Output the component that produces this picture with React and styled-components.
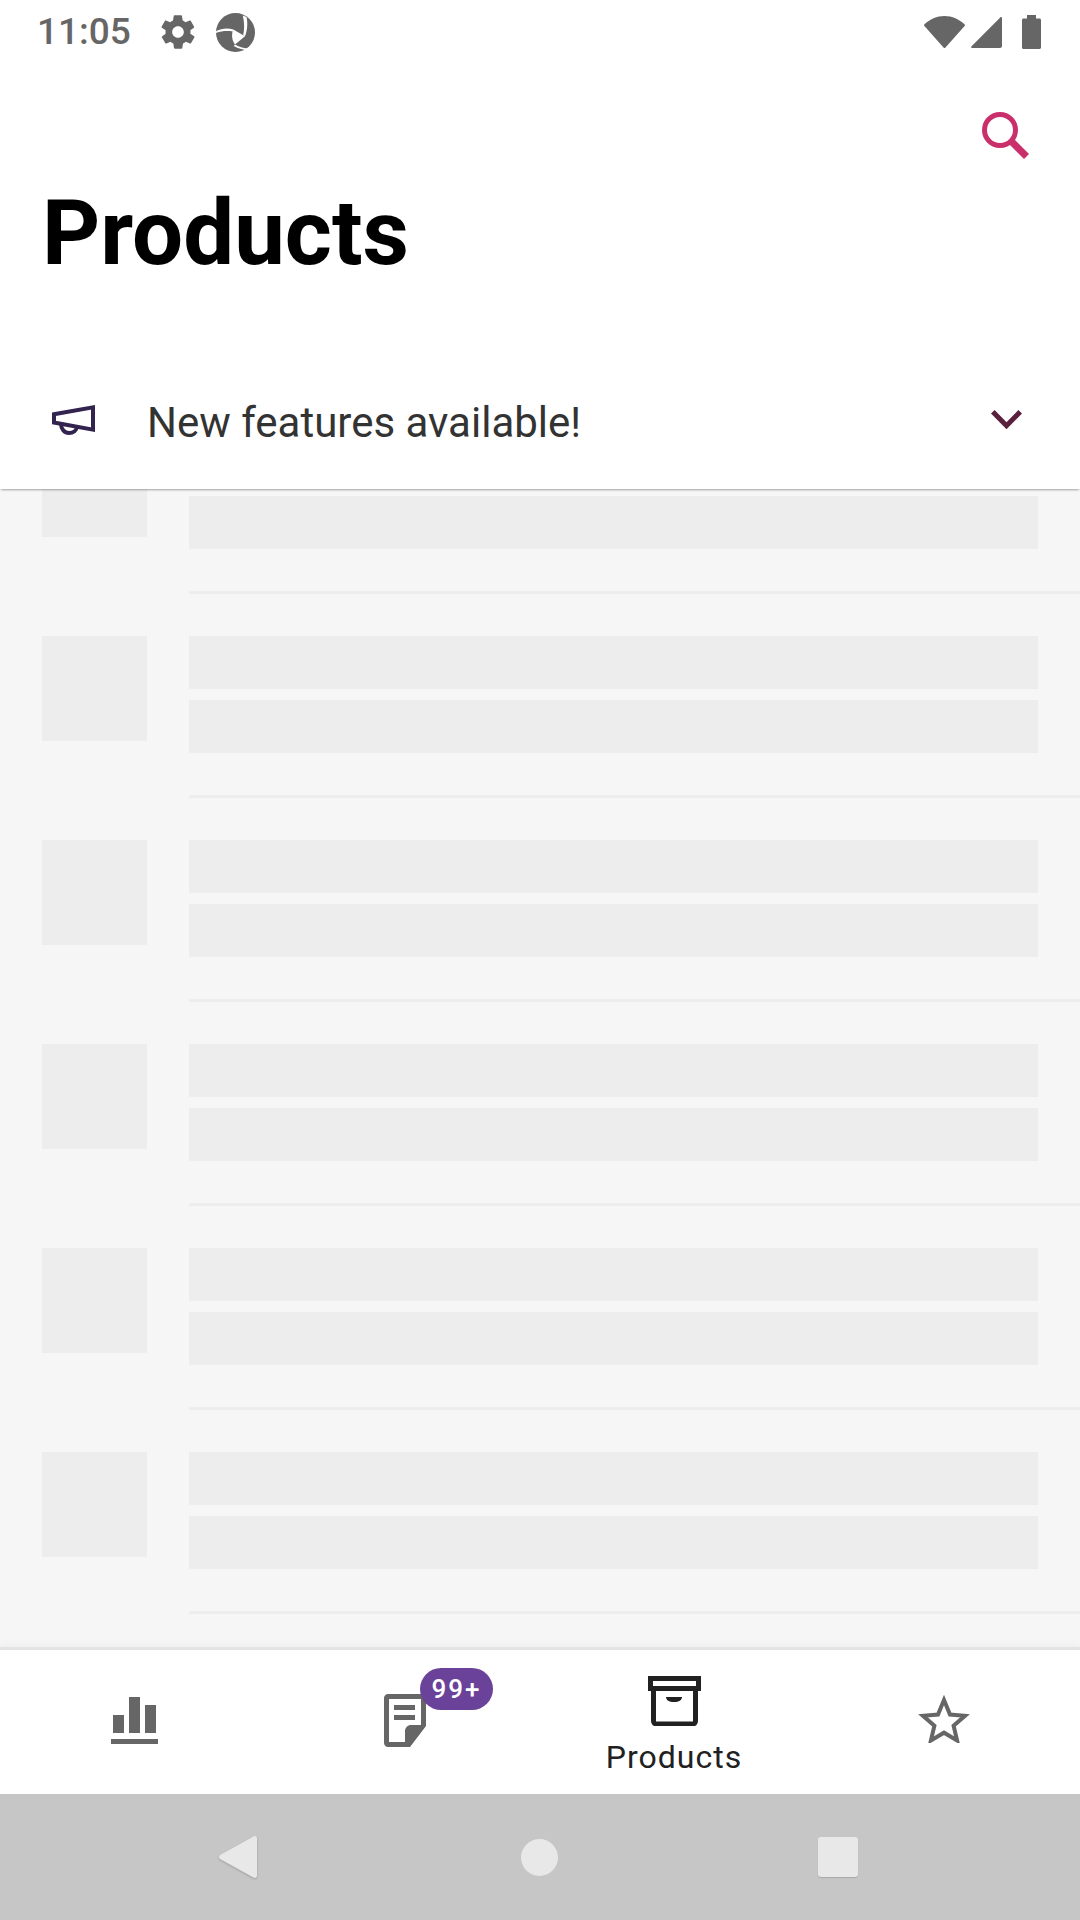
import styled, { createGlobalStyle } from "styled-components";

const GlobalStyle = createGlobalStyle`
  html, body {
    margin: 0;
    padding: 0;
    background: #fff;
  }
  * {
    box-sizing: border-box;
  }
`;

const Screen = styled.div`
  width: 1080px;
  height: 1920px;
  display: flex;
  flex-direction: column;
  background: #fff;
  font-family: Roboto, "Liberation Sans", sans-serif;
  overflow: hidden;
`;

const StatusBar = styled.div`
  height: 64px;
  flex: none;
  display: flex;
  align-items: center;
  padding: 0 39px 0 37px;
  color: #666;
`;

const Time = styled.span`
  font-size: 37px;
  font-weight: 500;
  line-height: 64px;
  width: 121px;
`;

const StatusLeft = styled.div`
  display: flex;
  align-items: center;
  gap: 18px;
  flex: 1;
`;

const StatusRight = styled.div`
  display: flex;
  align-items: center;
`;

const Header = styled.div`
  height: 292px;
  flex: none;
  padding: 48px 51px 0 42px;
  display: flex;
  flex-direction: column;
`;

const SearchRow = styled.div`
  display: flex;
  justify-content: flex-end;
`;

const Title = styled.h1`
  margin: 21px 0 0;
  font-size: 90.5px;
  font-weight: 700;
  line-height: 106px;
  color: #000;
`;

const Banner = styled.div`
  height: 133px;
  flex: none;
  display: flex;
  align-items: center;
  padding: 0 58px 0 52px;
  position: relative;
  z-index: 1;
  background: #fff;
  box-shadow: 0 2px 2px -1px rgba(0, 0, 0, 0.35);
`;

const BannerText = styled.span`
  flex: 1;
  margin-left: 52px;
  font-size: 42px;
  color: #333;
`;

const List = styled.div`
  flex: 1;
  min-height: 0;
  overflow: hidden;
  background: #f6f6f6;
`;

const Rows = styled.div`
  margin-top: -99px;
`;

const Row = styled.div`
  height: 204px;
  display: flex;
  gap: 42px;
  padding-left: 42px;
`;

const Thumb = styled.div`
  width: 105px;
  height: 105px;
  margin-top: 42px;
  background: #ededed;
`;

const RowBody = styled.div`
  flex: 1;
  padding-top: 42px;
  border-bottom: 3px solid #ededed;
`;

const Line = styled.div`
  width: 849px;
  height: 53px;
  background: #ededed;
  & + & {
    margin-top: 11px;
  }
`;

const TabBar = styled.div`
  height: 144px;
  flex: none;
  display: grid;
  grid-template-columns: repeat(4, 270px);
  position: relative;
  z-index: 1;
  background: #fff;
  box-shadow: 0 -3px 0 #e4e4e4, 0 -6px 8px rgba(0, 0, 0, 0.03);
`;

const Tab = styled.div`
  position: relative;
  display: flex;
  flex-direction: column;
  align-items: center;
  padding-top: ${(p) => (p.$active ? "26px" : "44px")};
  padding-right: ${(p) => (p.$active ? "2px" : "0")};
`;

const TabLabel = styled.span`
  margin-top: 12px;
  font-size: 32px;
  line-height: 38px;
  letter-spacing: 1px;
  color: #212121;
`;

const Badge = styled.span`
  position: absolute;
  left: 150px;
  top: 18px;
  width: 73px;
  height: 42px;
  border-radius: 21px;
  background: #6a4299;
  color: #fff;
  font-size: 26px;
  font-weight: 500;
  letter-spacing: 2px;
  line-height: 42px;
  text-align: center;
`;

const NavBar = styled.div`
  height: 126px;
  flex: none;
  display: grid;
  grid-template-columns: 219px 38px 264px 37px 260px 40px;
  align-items: center;
  background: #c6c6c6;
`;

const Filler = styled.span``;

const NavCircle = styled.div`
  width: 37px;
  height: 37px;
  border-radius: 50%;
  background: #e8e8e8;
`;

const NavSquare = styled.div`
  width: 40px;
  height: 40px;
  border-radius: 3px;
  background: #e8e8e8;
  box-shadow: 0 1px 1px rgba(0, 0, 0, 0.15);
`;

function App() {
  return (
    <Screen>
      <GlobalStyle />
      <StatusBar>
        <StatusLeft>
          <Time>11:05</Time>
          <svg width="40" height="40" viewBox="0 0 24 24" fill="#666" style={{ marginLeft: -18 }}>
            <path d="M19.4 13c0-.3.1-.6.1-1s0-.7-.1-1l2.100-1.600c.2-.2.3-.4.1-.7l-2-3.400c-.1-.2-.4-.3-.6-.2l-2.500 1c-.5-.4-1.100-.7-1.700-1l-.4-2.600c0-.3-.2-.5-.5-.5h-4c-.3 0-.5.2-.5.5l-.4 2.600c-.6.3-1.200.6-1.700 1l-2.500-1c-.2-.1-.5 0-.6.2l-2 3.400c-.2.3-.1.5.1.7L4.600 11c0 .3-.1.7-.1 1s0 .7.1 1l-2.100 1.600c-.2.2-.3.4-.1.7l2 3.400c.1.2.4.3.6.2l2.500-1c.5.4 1.100.7 1.700 1l.4 2.600c0 .3.2.5.5.5h4c.3 0 .5-.2.5-.5l.4-2.600c.6-.3 1.200-.6 1.700-1l2.500 1c.2.1.5 0 .6-.2l2-3.400c.2-.3.1-.5-.1-.7L19.400 13zM12 15.500c-1.900 0-3.500-1.600-3.500-3.500s1.600-3.500 3.500-3.500 3.500 1.600 3.500 3.500-1.600 3.500-3.500 3.500z" />
          </svg>
          <svg width="39" height="39" viewBox="0 0 39 39">
            <circle cx="19.500" cy="19.500" r="19.500" fill="#666" />
            <path fill="#fff" d="M17.300 16.600l11.700 6.700-10 8.300c-1.500-2-2.800-5-2.900-8-.1-2.500.3-5 1.200-7z" />
            <path fill="#fff" d="M.2 18c5.500-2.600 11.500-3.300 17.100-1.400l-.6 1.800C11 17.600 5.500 17.900 0 20z" />
            <path fill="#fff" d="M30.500 4c1.500 6.500.8 13.700-1.500 19.300l-1.800-1c1.200-6 1.400-12-.4-19.800z" />
            <path fill="#fff" d="M19 31.600c4.500 2.600 10 4.100 16.500 3.900l-1.300 1.700c-6.200.1-12-1.500-16.400-4.200z" />
          </svg>
        </StatusLeft>
        <StatusRight>
          <svg width="41" height="32" viewBox="0 0 41 32" fill="#666" style={{ marginRight: 6 }}>
            <path d="M.3 8.400C5.800 3.200 12.800 0 20.500 0s14.700 3.200 20.200 8.400c.4.400.4 1 .1 1.400L21.500 31.600c-.5.600-1.500.600-2 0L.2 9.800c-.3-.4-.3-1 .1-1.400z" />
          </svg>
          <svg width="31" height="31" viewBox="0 0 31 31" fill="#666" style={{ marginRight: 20 }}>
            <path d="M29.500.3c.6-.5 1.500-.1 1.500.7v28c0 1.100-.9 2-2 2H1c-.8 0-1.200-.9-.7-1.500L29.500.3z" />
          </svg>
          <svg width="19" height="34" viewBox="0 0 19 34" fill="#666">
            <path d="M5 0h9v3.500h3.500c.8 0 1.500.7 1.500 1.500v27.500c0 .8-.7 1.500-1.500 1.500h-16C.7 34 0 33.300 0 32.500V5c0-.8.7-1.500 1.500-1.500H5V0z" />
          </svg>
        </StatusRight>
      </StatusBar>
      <Header>
        <SearchRow>
          <svg width="47" height="47" viewBox="0 0 47 47" fill="none" stroke="#c9306b">
            <circle cx="18" cy="18" r="15.500" strokeWidth="5" />
            <path d="M29 29l15.500 15.500" strokeWidth="7" />
          </svg>
        </SearchRow>
        <Title>Products</Title>
      </Header>
      <Banner>
        <svg width="43" height="30" viewBox="0 0 43 30" fill="none" stroke="#33234f" strokeWidth="4" style={{ marginTop: -6 }}>
          <path d="M41 2.400v22.200L2 17.500V9.200z" />
          <path d="M9 19c0 5 3.500 9 8 9s7.500-3 8-6" />
        </svg>
        <BannerText>New features available!</BannerText>
        <svg width="31" height="20" viewBox="0 0 31 20" fill="none" stroke="#5a1f3d" strokeWidth="5" style={{ marginTop: -6 }}>
          <path d="M1.800 1.800l13.700 14 13.700-14" />
        </svg>
      </Banner>
      <List>
        <Rows>
          {[0, 1, 2, 3, 4, 5, 6].map((n) => (
            <Row key={n}>
              <Thumb />
              <RowBody>
                <Line />
                <Line />
              </RowBody>
            </Row>
          ))}
        </Rows>
      </List>
      <TabBar>
        <Tab>
          <svg width="47" height="47" viewBox="0 0 47 47" fill="#666" style={{ marginTop: 3, marginRight: 1 }}>
            <path d="M2 18h11v18H2zM18 0h11v36H18zM34 8h11v28H34zM0 42h47v5H0z" />
          </svg>
        </Tab>
        <Tab>
          <svg width="42" height="53" viewBox="0 0 42 53">
            <path fill="#666" fillRule="evenodd" d="M4 0h38v32L26 53H4c-2.200 0-4-1.800-4-4V4c0-2.200 1.800-4 4-4zm1 5v43h16V37c0-3.300 2.700-6 6-6h10V5H5z" />
            <path fill="#666" d="M10 11h21v5H10zM10 21h21v5H10z" />
          </svg>
          <Badge>99+</Badge>
        </Tab>
        <Tab $active>
          <svg width="53" height="50" viewBox="0 0 53 50" fill="none" stroke="#212121">
            <path d="M2.500 2.500h48v10h-48z" strokeWidth="5" />
            <path d="M5.500 15v30c0 1.500 1 3 3 3h36c2 0 3-1.500 3-3V15" strokeWidth="5" />
            <path d="M18 21h16c0 3-3 5-8 5s-8-2-8-5z" fill="#212121" stroke="none" />
          </svg>
          <TabLabel>Products</TabLabel>
        </Tab>
        <Tab>
          <svg width="52" height="49" viewBox="0 0 52 49" fill="none" stroke="#666" strokeWidth="4" style={{ marginRight: 2 }}>
            <path d="M26 6l6 14.500 15 1.300-11.400 9.900 3.500 14.800L26 38.700l-13.100 7.800 3.500-14.800L5 21.800l15-1.300z" />
          </svg>
        </Tab>
      </TabBar>
      <NavBar>
        <Filler />
        <svg width="38" height="42" viewBox="0 0 38 42" fill="#e8e8e8" style={{ filter: "drop-shadow(0 1px 1px rgba(0,0,0,0.2))" }}>
          <path d="M34.500.5c1.500-1 3.500 0 3.500 2v37c0 2-2 3-3.500 2L1 23c-1.300-1-1.300-3 0-4z" />
        </svg>
        <Filler />
        <NavCircle />
        <Filler />
        <NavSquare />
      </NavBar>
    </Screen>
  );
}

export default App;
